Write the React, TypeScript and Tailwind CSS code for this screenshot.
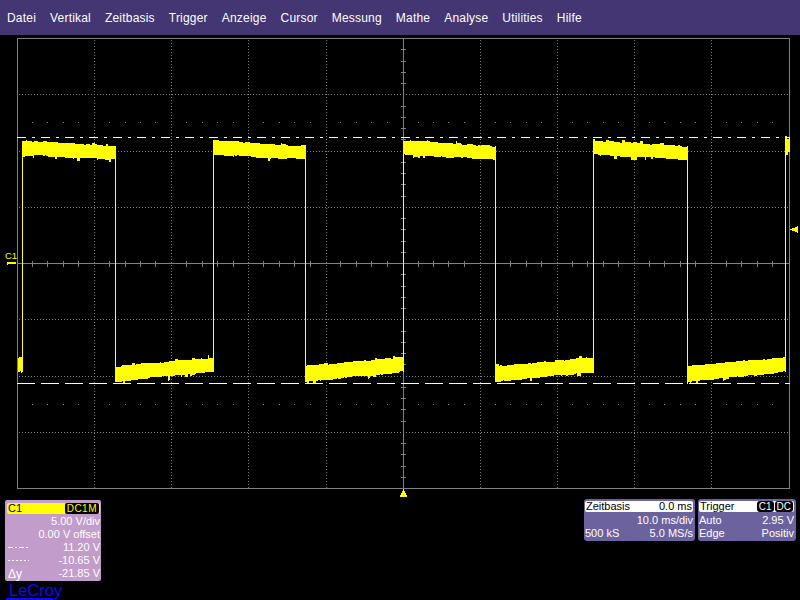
import React from "react";

const menu = ["Datei", "Vertikal", "Zeitbasis", "Trigger", "Anzeige", "Cursor", "Messung", "Mathe", "Analyse", "Utilities", "Hilfe"];

const X0 = 17, X1 = 789, Y0 = 38, Y1 = 488;
const OFF = 35;

function rng(seed: number) {
  let s = seed;
  return () => {
    s = (s * 1664525 + 1013904223) >>> 0;
    return s / 4294967296;
  };
}

function noise(r: () => number, n: number, spike: number) {
  const out: number[] = [];
  while (out.length < n) {
    const run = 2 + Math.floor(r() * 8);
    const v = r() > 0.72 ? 1 + r() * spike : r() * 1.5;
    const w = v > 1.5 ? 1 + Math.floor(r() * 3) : run;
    for (let i = 0; i < w; i++) out.push(v);
  }
  return out;
}

function band(x0: number, x1: number, t0: number, t1: number, b0: number, b1: number, seed: number) {
  const r = rng(seed);
  for (let i = 0; i < 5; i++) r();
  const n = x1 - x0;
  const nt = noise(r, n, 2.5);
  const nb = noise(r, n, 4);
  const top: string[] = [];
  const bot: string[] = [];
  for (let x = x0; x < x1; x++) {
    const f = (x - x0) / n;
    const t = Math.round(t0 + (t1 - t0) * f - nt[x - x0]);
    const b = Math.round(b0 + (b1 - b0) * f + nb[x - x0]);
    top.push(`${x},${t} ${x + 1},${t}`);
    bot.unshift(`${x + 1},${b} ${x},${b}`);
  }
  return top.concat(bot).join(" ");
}

const highs = [
  [22, 116],
  [213, 306],
  [403, 496],
  [593, 688],
];
const lows = [
  [115, 214],
  [305, 404],
  [495, 594],
  [687, 786],
];

function Grid() {
  const verticals = [1, 2, 3, 4, 6, 7, 8, 9].map((i) => Math.round(17.1 + 77.1 * i) + 0.5);
  const horizontals = [1, 2, 3, 5, 6, 7].map((i) => Math.round(Y0 + 56.25 * i) - OFF + 0.5);
  const xTicks = Array.from({ length: 50 }, (_, i) => Math.floor(17.15 + 15.42 * i) + 0.5);
  const yTicks = Array.from({ length: 40 }, (_, i) => Math.round(Y0 + 11.25 * i) - OFF + 0.5);
  return (
    <g>
      {verticals.map((x) => (
        <line key={x} x1={x} x2={x} y1={Y0 - OFF + 2} y2={Y1 - OFF} stroke="#808080" strokeDasharray="1 2" />
      ))}
      {horizontals.map((y) => (
        <line key={y} x1={X0 + 2} x2={X1} y1={y} y2={y} stroke="#808080" strokeDasharray="1 2" />
      ))}
      {xTicks.map((x, i) =>
        i % 5 === 0 ? null : (
          <g key={x}>
            <rect x={x - 0.5} y={122 - OFF} width="1" height="1" fill="#808080" />
            <rect x={x - 0.5} y={404 - OFF} width="1" height="1" fill="#808080" />
            <line x1={x} x2={x} y1={261 - OFF} y2={267 - OFF} stroke="#808080" />
          </g>
        )
      )}
      {yTicks.map((y, i) =>
        i % 5 === 0 ? null : <line key={y} x1={401} x2={406} y1={y} y2={y} stroke="#808080" />
      )}
      <rect x={X0 + 0.5} y={Y0 - OFF + 0.5} width={X1 - X0} height={Y1 - Y0} fill="none" stroke="#808080" />
      <line x1={X0} x2={X1} y1={263.5 - OFF} y2={263.5 - OFF} stroke="#808080" />
      <line x1={403.5} x2={403.5} y1={Y0 - OFF} y2={Y1 - OFF} stroke="#808080" />
    </g>
  );
}

function Wave() {
  const edges = [22, 115, 213, 305, 403, 495, 593, 687, 785];
  return (
    <g>
      {edges.map((x) => (
        <rect key={x} x={x} y={146 - OFF} width="1" height={372 - 146} fill="#ffff33" />
      ))}
      {highs.map(([a, b], i) => (
        <polygon key={a} points={band(a, b, 141 - OFF, 147 - OFF, 154 - OFF, 159 - OFF, 17 + i * 31)} fill="#ffff00" />
      ))}
      {lows.map(([a, b], i) => (
        <polygon key={a} points={band(a, b, 367 - OFF, 358 - OFF, 381 - OFF, 371 - OFF, 91 + i * 13)} fill="#ffff00" />
      ))}
      <polygon points={band(18, 23, 358 - OFF, 357 - OFF, 371 - OFF, 369 - OFF, 5)} fill="#ffff00" />
      <polygon points={band(785, 790, 139 - OFF, 139 - OFF, 152 - OFF, 152 - OFF, 8)} fill="#ffff00" />
    </g>
  );
}

function Plot() {
  return (
    <svg width="800" height="464" className="block" shapeRendering="crispEdges">
      <Grid />
      <Wave />
      <line x1={17} x2={790} y1={137.5 - OFF} y2={137.5 - OFF} stroke="#ffffff" strokeDasharray="9 6 3 6" />
      <line x1={17} x2={790} y1={383.5 - OFF} y2={383.5 - OFF} stroke="#ffffff" strokeDasharray="18 6" />
      <rect x={7} y={262 - OFF} width="9" height="2" fill="#ffff00" />
      <rect x={7} y={262 - OFF} width="1" height="3" fill="#ffff00" />
      <polygon points={`790,${229.5 - OFF} 798,${226 - OFF} 798,${233 - OFF}`} fill="#ffff00" />
      <polygon points={`403.5,${489 - OFF} 407.5,${497 - OFF} 399.5,${497 - OFF}`} fill="#ffff00" />
      <text x={5} y={259 - OFF} fontSize="9.5" fill="#ffff00" fontFamily="Liberation Sans, sans-serif">
        C1
      </text>
    </svg>
  );
}

function Row({ l, r }: { l?: React.ReactNode; r: React.ReactNode }) {
  return (
    <div className="flex h-[13px] items-center justify-between leading-none">
      <span>{l}</span>
      <span>{r}</span>
    </div>
  );
}

function Badge({ children }: { children: React.ReactNode }) {
  return <span className="rounded-[3px] bg-black px-[2px] text-[10px] leading-[11px] text-white">{children}</span>;
}

export default function App() {
  return (
    <div className="relative h-[600px] w-[800px] overflow-hidden bg-black font-['Liberation_Sans',Arial,sans-serif]">
      <div className="flex h-[35px] items-center gap-[14px] bg-[#433672] pl-[7px] text-[12px] tracking-[0.2px] text-white">
        {menu.map((m) => (
          <span key={m}>{m}</span>
        ))}
      </div>
      <Plot />
      <div className="flex items-start pl-[5px] pr-[4px]">
        <div className="pt-[1px]">
          <div className="w-[96px] rounded-[2px] bg-[#c29ccb] pb-[1px] pl-[2px] pr-[1px] pt-[3px] text-[11px] text-white">
            <div className="flex h-[11px] items-center justify-between rounded-[2px] bg-[#ffff00] pl-[1px] pr-[1px] text-black">
              <span>C1</span>
              <span className="rounded-[2px] bg-black px-[2px] text-[10px] leading-[11px] tracking-[0.5px] text-[#ffff00]">DC1M</span>
            </div>
            <div className="pt-[1px] [&>div]:pl-[1px]">
              <Row r="5.00 V/div" />
              <Row r="0.00 V offset" />
              <Row
                l={
                  <svg width="21" height="3" className="block" shapeRendering="crispEdges">
                    <line x1="0" x2="21" y1="1.5" y2="1.5" stroke="#ffffff" strokeDasharray="5 2 2 2" />
                  </svg>
                }
                r="11.20 V"
              />
              <Row
                l={
                  <svg width="21" height="3" className="block" shapeRendering="crispEdges">
                    <line x1="0" x2="21" y1="1.5" y2="1.5" stroke="#ffffff" strokeDasharray="2 2" />
                  </svg>
                }
                r="-10.65 V"
              />
              <Row l={<span className="text-[12px]">Δy</span>} r="-21.85 V" />
            </div>
          </div>
          <div className="ml-[1px] mt-[1px] h-[18px] w-[47px] whitespace-nowrap border-b-2 border-[#0a0aff] pl-[3px] text-[16.5px] leading-[16px] text-[#0a0aff]">
            LeCroy
          </div>
        </div>
        <div className="flex-1" />
        <div className="flex gap-[3px]">
          <div className="h-[42px] w-[111px] rounded-[3px] bg-[#6c629d] pl-[1px] pr-[2px] pt-[2px] text-[11px] text-white">
            <div className="mb-[2px] flex h-[11px] items-center justify-between rounded-[2px] bg-white px-[1px] text-black">
              <span>Zeitbasis</span>
              <span>0.0 ms</span>
            </div>
            <Row r="10.0 ms/div" />
            <Row l="500 kS" r="5.0 MS/s" />
          </div>
          <div className="h-[42px] w-[98px] rounded-[3px] bg-[#6c629d] pl-[1px] pr-[2px] pt-[2px] text-[11px] text-white">
            <div className="mb-[2px] flex h-[11px] items-center justify-between rounded-[2px] bg-white px-[1px] text-black">
              <span>Trigger</span>
              <span className="flex gap-[1px]">
                <Badge>C1</Badge>
                <Badge>DC</Badge>
              </span>
            </div>
            <Row l="Auto" r="2.95 V" />
            <Row l="Edge" r="Positiv" />
          </div>
        </div>
      </div>
    </div>
  );
}
